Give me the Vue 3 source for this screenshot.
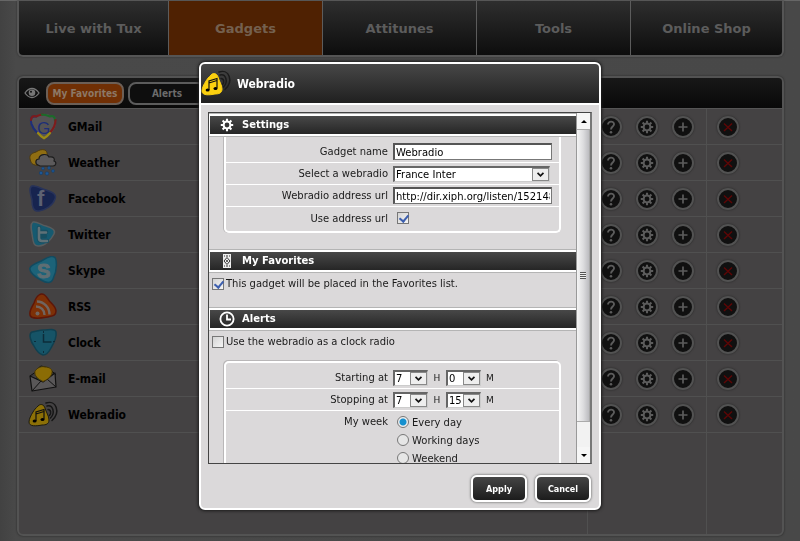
<script setup>
import { ref } from 'vue'

const tabs = ['Live with Tux', 'Gadgets', 'Attitunes', 'Tools', 'Online Shop']
const gadgets = [
  { id: 'gmail', name: 'GMail', letter: 'G' },
  { id: 'weather', name: 'Weather' },
  { id: 'facebook', name: 'Facebook', letter: 'f' },
  { id: 'twitter', name: 'Twitter' },
  { id: 'skype', name: 'Skype', letter: 'S' },
  { id: 'rss', name: 'RSS' },
  { id: 'clock', name: 'Clock' },
  { id: 'email', name: 'E-mail' },
  { id: 'webradio', name: 'Webradio' },
]
const name = ref('Webradio')
const url = ref('http://dir.xiph.org/listen/1521483/listen.m3u')
const useUrl = ref(true)
const favorite = ref(true)
const clockRadio = ref(false)
const week = ref('Every day')
const weekOptions = ['Every day', 'Working days', 'Weekend']
const times = [
  { id: 'start', label: 'Starting at', hour: '7', minute: '0' },
  { id: 'stop', label: 'Stopping at', hour: '7', minute: '15' },
]
</script>

<template>
  <svg class="defs" aria-hidden="true">
    <symbol id="i-gmail" viewBox="0 0 32 30">
      <path d="M8 4C3 3 1 7 3 12c2 6 7 12 13 15 6-3 11-9 12-15 1-6-1-9-5-8-3-3-11-3-15 0z" fill="#555354" />
      <g fill="none" stroke-width="2.200" stroke-linecap="round">
        <path d="M8 4.500C3 3.500 2 7 3.500 12c1 3 3 6 5 8" stroke="#1e2e78" />
        <path d="M3 8c0-3 2-4.500 5-3.500 2-1 4-2 7-2" stroke="#7d1c1c" />
        <path d="M14 2.600c4 0 6 1 8 1.800 3-.8 5 .2 5 4" stroke="#1c6a2a" />
        <path d="M27.500 8c0 4-1.500 8-5 12" stroke="#7d1c1c" />
        <path d="M10 21c2 2.500 4 4 6 5.200 2-1.200 4-2.700 6-5.200" stroke="#9a8a14" />
      </g>
    </symbol>
    <symbol id="i-weather" viewBox="0 0 32 30">
      <path d="M2 11C1 6 5 5 8 4c3-2 6-3 9-2 3 2 2 5 2 8-4 7-8 8-12 7-4-1-4-3-5-6z" fill="#8f6d12" stroke="#4c3a10" />
      <path d="M10 17c-3-1-3-6 1-6 0-5 8-6 10-2 5-1 6 2 5 4 3 1 2 5-1 5H12z" fill="#5c5a5b" stroke="#1c1c1c" stroke-width="1.200" />
      <g fill="#1d5794" stroke="#123a66" stroke-width=".5">
        <circle cx="15" cy="20.500" r="1.400" /><circle cx="21" cy="20" r="1.400" />
        <circle cx="13" cy="25" r="1.700" /><circle cx="19" cy="25.500" r="1.700" /><circle cx="25" cy="23" r="1.400" />
      </g>
    </symbol>
    <symbol id="i-facebook" viewBox="0 0 32 30">
      <path d="M4 2c5-1 9 3 14 4 6 2 11 4 9 9-2 6-9 11-16 12-6 1-7-5-7-11C3 11 0 4 4 2z" fill="#17244f" stroke="#28335a" stroke-width="1.500" />
    </symbol>
    <symbol id="i-twitter" viewBox="0 0 32 30">
      <path d="M5 2c4-1 8 3 13 4 6 2 10 4 8 8-3 6-9 12-15 12-6 1-6-6-7-12C3 9 2 4 5 2z" fill="#165a70" stroke="#575c5e" stroke-width="1.500" />
      <path d="M11 8v10q0 3 3 3h5M12 12h6M12 16h5" fill="none" stroke="#184e60" stroke-width="4.500" stroke-linecap="round" />
      <path d="M11 8v10q0 3 3 3h5M12 12.500h6" fill="none" stroke="#5f7177" stroke-width="2.600" stroke-linecap="round" />
    </symbol>
    <symbol id="i-skype" viewBox="0 0 32 30">
      <path d="M28 4c1 6 0 13-3 19-2 5-7 4-12 1C7 21 1 16 2 12c2-4 8-5 13-8 5-3 12-6 13 0z" fill="#1c6379" stroke="#124b60" stroke-width="1.500" />
    </symbol>
    <symbol id="i-rss" viewBox="0 0 32 30">
      <path d="M11 3c4-3 7 1 9 4 2 4 8 7 8 12 0 5-4 5-8 6-6 1-17 3-18-2-1-4 2-8 4-12 1-3 2-6 5-8z" fill="#7d3007" stroke="#5e1608" stroke-width="1.500" />
      <circle cx="9.500" cy="21.500" r="2" fill="#706560" />
      <path d="M8 14.500c5 0 8.500 3.500 8.500 8.500M9 9.500c7 0 12.500 6 12.500 13" fill="none" stroke="#706560" stroke-width="2.400" />
    </symbol>
    <symbol id="i-clock" viewBox="0 0 32 30">
      <path d="M4 4c5-1 8-2 12-2 5 0 11-2 12 2 1 5-2 11-5 16-2 4-4 7-8 7-4-1-7-5-9-9C3 14 0 6 4 4z" fill="#165467" stroke="#104050" stroke-width="1.500" />
      <path d="M15.500 6v8h8" fill="none" stroke="#0d2c3a" stroke-width="1.500" />
      <path d="M15.500 3v2M6 13.500h2M15.500 23v2M25 13.500h2" stroke="#0d2c3a" />
    </symbol>
    <symbol id="i-email" viewBox="0 0 32 30">
      <path d="M9 5l4-3 8 2 5 5-6 8H9z" fill="#0e6471" stroke="#111" />
      <path d="M2 12l7-5h14l5 4" fill="#3b393a" stroke="#111" />
      <path d="M2 12l13 6 12-9 1 14-24 4z" fill="#595758" stroke="#111" stroke-width="1.200" stroke-linejoin="round" />
      <path d="M4 27l9-10M28 23l-9-8" stroke="#111" />
      <path d="M7 7c3-4 7-5 10-4 4 0 8 2 7 6-1 4-5 7-9 8.500C10 15 6 12 7 7z" fill="#8b6c05" stroke="#4b3a08" />
    </symbol>
    <symbol id="i-webradio" viewBox="0 0 32 30">
      <g fill="none" stroke="var(--wave)" stroke-width="1.500" stroke-linecap="round">
        <path d="M20 9.500c3 0 3.500 4 1.500 6" />
        <path d="M19 6c6-1.500 8.500 7 3.500 12" />
        <path d="M18 3c10-3.500 15 9 6 17.500" />
      </g>
      <path d="M10 6c3-3 6-1 7 2 1 4 4 8 4 12 0 4-3 5-7 5-5 1-13 2-13-3 0-3 2-7 4-10 1-2 3-4 5-6z" fill="var(--pick)" stroke="var(--edge)" />
      <path d="M8 21V12l8-2.500V19M8 14l8-2.500" fill="none" stroke="#111" stroke-width="1.200" />
      <ellipse cx="6.600" cy="21" rx="2" ry="1.500" /><ellipse cx="14.500" cy="19.500" rx="2" ry="1.500" />
    </symbol>
    <symbol id="i-gear" viewBox="0 0 14 14">
      <path d="M7 .8v12.400M.8 7h12.400M2.600 2.600l8.800 8.800M11.400 2.600l-8.800 8.800" stroke="currentColor" stroke-width="2.100" />
      <circle cx="7" cy="7" r="3.400" fill="var(--hole)" stroke="currentColor" stroke-width="2" />
    </symbol>
  </svg>

  <div class="page">
    <nav class="tabs">
      <a v-for="tab in tabs" :key="tab" href="#" :class="{ active: tab === 'Gadgets' }">{{ tab }}</a>
    </nav>

    <main class="panel">
      <header class="filters">
        <svg class="eye" viewBox="0 0 16 12">
          <path d="M1 6c4-6 10-6 14 0-4 6-10 6-14 0z" fill="none" stroke="currentColor" stroke-width="1.300" />
          <circle cx="8" cy="5.800" r="3.300" fill="currentColor" /><circle cx="7" cy="4.800" r="1" fill="#111" />
        </svg>
        <button type="button" class="pill on">My Favorites</button>
        <button type="button" class="pill">Alerts</button>
      </header>
      <ul class="list">
        <li v-for="g in gadgets" :key="g.id" class="row">
          <div class="gadget">
            <svg class="logo" aria-hidden="true">
              <use :href="'#i-' + g.id" />
              <text v-if="g.letter" :class="g.id" x="9" y="22">{{ g.letter }}</text>
            </svg>
            <span>{{ g.name }}</span>
          </div>
          <div class="actions">
            <button type="button" class="round" aria-label="Help">
              <svg viewBox="0 0 14 14"><path d="M4 4.600C4 .6 10.400.8 10 4.500 9.800 6.500 7 6.600 7 9.500" fill="none" stroke="currentColor" stroke-width="1.900" /><circle cx="7" cy="12.200" r="1.300" fill="currentColor" /></svg>
            </button>
            <button type="button" class="round" aria-label="Settings"><svg><use href="#i-gear" /></svg></button>
            <button type="button" class="round" aria-label="Add">
              <svg viewBox="0 0 14 14"><path d="M7 2.500v9M2.500 7h9" stroke="currentColor" stroke-width="1.700" /></svg>
            </button>
          </div>
          <div class="remove">
            <button type="button" class="round red" aria-label="Remove">
              <svg viewBox="0 0 14 14"><path d="M3 3.500l8 7.500M11 3.500L3 11" stroke="currentColor" stroke-width="1.500" /></svg>
            </button>
          </div>
        </li>
        <li class="row rest"><div></div><div class="actions"></div><div class="remove"></div></li>
      </ul>
    </main>
  </div>

  <div class="overlay">
    <form class="dialog" role="dialog" aria-labelledby="dialog-title" @submit.prevent>
      <header class="title">
        <svg class="logo"><use href="#i-webradio" /></svg>
        <h1 id="dialog-title">Webradio</h1>
      </header>

      <div class="scroller">
        <div class="content">
          <h2><svg class="sign"><use href="#i-gear" /></svg>Settings</h2>
          <div class="group first">
            <div class="field">
              <label for="name">Gadget name</label>
              <input id="name" v-model="name" class="text" type="text">
            </div>
            <div class="field">
              <label for="station">Select a webradio</label>
              <span class="pick wide">
                <select id="station"><option>France Inter</option></select>
                <svg viewBox="0 0 16 13"><path d="M4.500 4.500L8 8l3.500-3.500" /></svg>
              </span>
            </div>
            <div class="field">
              <label for="url">Webradio address url</label>
              <input id="url" v-model="url" class="text" type="text">
            </div>
            <div class="field">
              <label for="use-url">Use address url</label>
              <input id="use-url" v-model="useUrl" class="check inset" type="checkbox">
            </div>
          </div>

          <h2>
            <svg class="sign" viewBox="0 0 14 14"><path d="M3 0h8v14H3z" fill="#eee" /><path d="M7 1v2M7 11v2M4 2h1M9 2h1M4 12h1M9 12h1" stroke="#333" /><path d="M7 3.500L10 7l-3 3.500L4 7z" fill="none" stroke="#333" /><circle cx="7" cy="7" r="1" fill="#333" /></svg>
            My Favorites
          </h2>
          <div class="line favorite">
            <input id="fav" v-model="favorite" class="check" type="checkbox">
            <label for="fav">This gadget will be placed in the Favorites list.</label>
          </div>

          <h2>
            <svg class="sign big" viewBox="0 0 16 16"><circle cx="8" cy="8" r="6.600" fill="none" stroke="#fff" stroke-width="1.800" /><path d="M8 3.500V8.500h4" fill="none" stroke="#fff" stroke-width="1.800" /></svg>
            Alerts
          </h2>
          <div class="line">
            <input id="clock" v-model="clockRadio" class="check" type="checkbox">
            <label for="clock">Use the webradio as a clock radio</label>
          </div>
          <div class="group second">
            <div v-for="t in times" :key="t.id" class="field time">
              <label :for="t.id">{{ t.label }}</label>
              <span class="pick">
                <select :id="t.id"><option>{{ t.hour }}</option></select>
                <svg viewBox="0 0 16 13"><path d="M4.500 4.500L8 8l3.500-3.500" /></svg>
              </span>
              <span class="unit">H</span>
              <span class="pick">
                <select :aria-label="t.label + ' minutes'"><option>{{ t.minute }}</option></select>
                <svg viewBox="0 0 16 13"><path d="M4.500 4.500L8 8l3.500-3.500" /></svg>
              </span>
              <span class="unit">M</span>
            </div>
            <div class="field week">
              <span id="week" class="label">My week</span>
              <div class="options" role="radiogroup" aria-labelledby="week">
                <label v-for="o in weekOptions" :key="o">
                  <input v-model="week" class="radio" type="radio" name="week" :value="o">{{ o }}
                </label>
              </div>
            </div>
          </div>
        </div>
        <div class="bar">
          <button type="button" aria-label="Scroll up"><svg viewBox="0 0 6 3"><path d="M0 3l3-3 3 3z" /></svg></button>
          <div class="thumb"></div>
          <div class="track"></div>
          <button type="button" aria-label="Scroll down"><svg viewBox="0 0 6 3"><path d="M0 0l3 3 3-3z" /></svg></button>
        </div>
      </div>

      <footer class="buttons">
        <button type="submit">Apply</button>
        <button type="button">Cancel</button>
      </footer>
    </form>
  </div>
</template>

<style>
body {
  background: #484848;
  font-family: "DejaVu Sans", Verdana, sans-serif;
}
</style>

<style scoped>
* { box-sizing: border-box; }
button, input, select { font: inherit; margin: 0; }
.defs { position: absolute; width: 0; height: 0; }

.page {
  display: flex;
  flex-direction: column;
  gap: 19px;
  min-height: 100vh;
  padding: 0 16px 5px 17px;
  border-top: 1px solid #666;
  background: linear-gradient(90deg, #424242, #494949 16px, #484848);
  color: #000;
  font-family: "DejaVu Sans Condensed", "DejaVu Sans", sans-serif;
  font-stretch: condensed;
  font-weight: 700;
}
.tabs {
  display: grid;
  grid-template-columns: 149fr 153fr 153fr 153fr 151fr;
  gap: 1px;
  border: 2px solid #555;
  border-top: 0;
  border-radius: 0 0 6px 6px;
  background: #5c5c5c;
  box-shadow: 0 0 2px #2c2c2c;
  overflow: hidden;
}
.tabs a {
  padding: 19px 0 18px;
  background: linear-gradient(#2e2e2e, #0d0d0d);
  color: #5c5c5c;
  font-family: "DejaVu Sans", Verdana, sans-serif;
  font-stretch: normal;
  font-size: 13px;
  line-height: 17px;
  text-align: center;
  text-decoration: none;
}
.tabs a.active { background: #4f2102; color: #74604f; }

.panel {
  flex: 1;
  display: flex;
  flex-direction: column;
  border: 2px solid #535353;
  border-radius: 6px;
  background: #444243;
  box-shadow: 0 0 2px #222;
  overflow: hidden;
}
.filters {
  display: flex;
  align-items: center;
  gap: 4px;
  height: 31px;
  padding-left: 5px;
  border-bottom: 1px solid #555;
  background: linear-gradient(#181818, #090909);
}
.eye { width: 16px; height: 12px; margin-right: 2px; color: #777; }
.pill {
  width: 78px;
  height: 23px;
  padding: 0;
  border: 2px solid #5c5c5c;
  border-radius: 8px;
  background: #0e0e0e;
  color: #6c6c6c;
  font-size: 10px;
}
.pill.on { background: #702f04; color: #8c7867; border-color: #6c5f56; }
.list {
  flex: 1;
  display: flex;
  flex-direction: column;
  margin: 0;
  padding: 0;
  list-style: none;
}
.row {
  display: grid;
  grid-template-columns: 1fr 119px 76px;
  height: 36px;
  border-bottom: 1px solid #505050;
}
.row.rest { flex: 1; border: 0; }
.gadget {
  display: flex;
  align-items: center;
  gap: 8px;
  padding-left: 9px;
  font-size: 12px;
}
.logo { width: 32px; height: 30px; --pick: #8c7007; --edge: #1c1a10; --wave: #161616; }
.logo text { font-family: "Liberation Sans", Arial, sans-serif; }
.logo .gmail { fill: #1e2e78; font-size: 17px; font-weight: 400; }
.logo .facebook { fill: #5d6172; font-size: 22px; }
.logo .skype { fill: #5f6e73; stroke: #5f6e73; font-size: 20px; }
.actions, .remove {
  display: flex;
  align-items: center;
  gap: 14px;
  padding-left: 12px;
  border-left: 1px solid #505050;
}
.remove { padding-left: 10px; }
.round {
  display: grid;
  place-items: center;
  width: 22px;
  height: 22px;
  padding: 0;
  border: 2px solid #525252;
  border-radius: 50%;
  background: #101010;
  box-shadow: 0 0 2px #222;
  color: #5c5c5c;
  --hole: #101010;
}
.round svg { width: 14px; height: 14px; }
.round.red { color: #5c0606; }

.overlay {
  position: fixed;
  inset: 0;
  display: flex;
  justify-content: center;
  padding: 62px 0 31px;
  color: #1a1a1a;
  font-size: 10px;
}
.dialog {
  display: flex;
  flex-direction: column;
  width: 402px;
  max-width: 100%;
  border: 2px solid #fff;
  border-radius: 6px;
  background: #dbd9da;
  box-shadow: 0 0 3px 1px #1c1c1c;
  overflow: hidden;
}
.title {
  display: flex;
  align-items: center;
  gap: 4px;
  flex: none;
  height: 41px;
  border-bottom: 2px solid #fff;
  background: linear-gradient(#474747, #202020);
}
.title .logo { --pick: #fbd00f; --edge: #fbd00f; --wave: #1b1b1b; }
.title h1 {
  margin: 0;
  color: #fff;
  font: 700 12px "DejaVu Sans Condensed", "DejaVu Sans", sans-serif;
  font-stretch: condensed;
}
.scroller {
  flex: 1;
  display: flex;
  min-height: 0;
  margin: 7px 7px 0;
  border: 1px solid #444;
  border-right: 2px solid #777;
}
.content {
  flex: 1;
  display: flex;
  flex-direction: column;
  min-width: 0;
  overflow: hidden;
}
.content > * { flex: none; }
h2 {
  display: flex;
  align-items: center;
  gap: 8px;
  height: 22px;
  margin: 1px 0;
  padding-left: 10px;
  border: 0 solid #fff;
  border-width: 2px 0 2px 1px;
  outline: 1px solid #b4b4b4;
  background: linear-gradient(#484848, #262626);
  color: #fff;
  font-size: 10px;
  line-height: 18px;
}
.sign { width: 14px; height: 14px; color: #fff; --hole: #363636; }
.sign.big { width: 16px; height: 16px; margin: 0 -1px; }
.group {
  margin: 0 15px;
  border: 2px solid #fff;
  border-radius: 5px;
  box-shadow: -1px -1px 0 #b9b7b8;
}
.group.first { margin-bottom: 16px; border-top: 0; border-radius: 0 0 5px 5px; box-shadow: -1px 0 0 #b9b7b8; }
.group.second { margin-top: 8px; }
.field {
  display: grid;
  grid-template-columns: 162px 159px;
  align-items: center;
  column-gap: 5px;
  height: 22px;
  border-bottom: 1px solid #fff;
}
.field:first-child { height: 26px; padding-top: 4px; }
.field:last-child { height: 24px; padding-bottom: 2px; border: 0; }
.field > label, .label { text-align: right; }
.text {
  width: 100%;
  height: 17px;
  padding: 0 1px;
  border: 2px solid #666;
  border-width: 2px 1px 1px 2px;
  border-color: #555 #777 #777 #555;
  background: #fff;
  color: #000;
}
.pick { display: grid; width: 35px; }
.pick.wide { width: 157px; }
.pick select {
  grid-area: 1 / 1;
  width: 100%;
  height: 16px;
  padding: 0 0 0 1px;
  appearance: none;
  border: 1px solid #999;
  border-width: 2px 1px 1px 2px;
  border-color: #666 #ccc #ccc #666;
  border-radius: 0;
  background: #fff;
  color: #000;
}
.pick svg {
  grid-area: 1 / 1;
  justify-self: end;
  align-self: center;
  width: 17px;
  height: 13px;
  margin: 1px 1px 0 0;
  border: 1px solid #888;
  background: #eee;
  pointer-events: none;
}
.pick path { fill: none; stroke: #111; stroke-width: 2; }
.check {
  flex: none;
  width: 12px;
  height: 12px;
  appearance: none;
  border: 1px solid #777;
  background: linear-gradient(135deg, #d4d4d4, #f5f5f5);
}
.check.inset { margin-left: 4px; }
.check:checked::before {
  content: "";
  display: block;
  width: 4px;
  height: 7px;
  margin: 0 3px;
  border: solid #3d5fae;
  border-width: 0 2px 2px 0;
  transform: rotate(40deg);
}
.line { display: flex; align-items: center; gap: 2px; height: 22px; padding-left: 3px; }
.line.favorite { margin-bottom: 12px; }
.line label { line-height: 14px; }
.field.time { grid-template-columns: 162px 35px 8px 35px 8px; }
.unit { font-size: 9px; text-align: center; }
.field.week { height: auto; align-items: start; }
.label { line-height: 22px; }
.options { display: grid; grid-auto-rows: 18px; padding: 2px 0 0 4px; }
.options label { display: flex; align-items: center; gap: 3px; }
.radio {
  width: 12px;
  height: 12px;
  appearance: none;
  border: 1px solid #777;
  border-radius: 50%;
  background: #e6e6e6;
}
.radio:checked { background: radial-gradient(circle, #1590cf 3px, #eee 4px); }
.bar {
  display: flex;
  flex-direction: column;
  width: 14px;
  border-left: 1px solid #999;
  background: #f2f2f2;
}
.bar button {
  display: grid;
  place-items: center;
  height: 16px;
  padding: 0;
  border: 0;
  background: #f6f6f6;
}
.bar svg { width: 6px; height: 3px; }
.thumb {
  flex: 293;
  display: grid;
  place-items: center;
  border: 1px solid #aaa;
  border-left: 0;
  background: linear-gradient(90deg, #f4f4f4, #dedee0 50%, #bcbcc0);
}
.thumb::before {
  content: "";
  width: 6px;
  height: 7px;
  background: repeating-linear-gradient(#555 0 1px, #eee 1px 2px);
}
.track { flex: 25; }
.buttons {
  display: flex;
  justify-content: flex-end;
  gap: 8px;
  padding: 11px 8px 6px;
}
.buttons button {
  width: 56px;
  height: 27px;
  padding: 0;
  border: 2px solid #fff;
  border-radius: 6px;
  background: linear-gradient(#454545, #1c1c1c);
  box-shadow: 0 0 2px 1px #999;
  color: #fff;
  font: 700 9px "DejaVu Sans Condensed", "DejaVu Sans", sans-serif;
  font-stretch: condensed;
}
</style>
